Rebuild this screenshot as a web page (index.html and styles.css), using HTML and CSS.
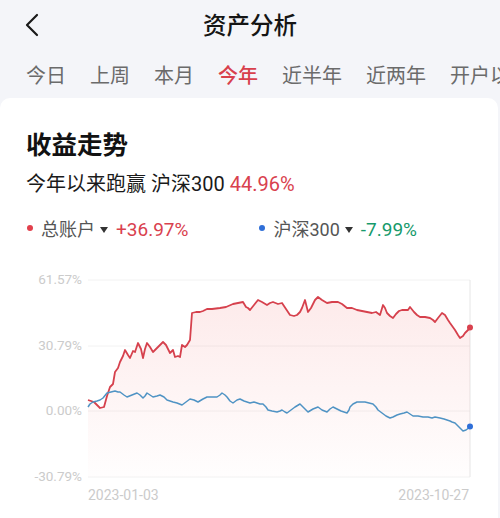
FILE: index.html
```html
<!DOCTYPE html>
<html lang="zh-CN">
<head>
<meta charset="utf-8">
<title>资产分析</title>
<link rel="stylesheet" href="styles.css">
</head>
<body>
<div class="page">
  <header class="topbar">
    <svg class="back" width="20" height="26" viewBox="0 0 20 26"><path d="M14 3 L4 13 L14 23" fill="none" stroke="#1a1a1a" stroke-width="2.2" stroke-linecap="round" stroke-linejoin="round"/></svg>
    <h1 class="title">资产分析</h1>
  </header>
  <nav class="tabs">
    <span class="tab">今日</span>
    <span class="tab">上周</span>
    <span class="tab">本月</span>
    <span class="tab active">今年</span>
    <span class="tab">近半年</span>
    <span class="tab">近两年</span>
    <span class="tab">开户以来</span>
  </nav>
  <section class="card">
    <div class="card-head">
      <h2 class="card-title">收益走势</h2>
      <p class="summary">今年以来跑赢 沪深300 <span class="up">44.96%</span></p>
      <div class="legend">
        <span class="item"><i class="dot red"></i><span class="name">总账户</span><i class="caret"></i><span class="up val">+36.97%</span></span>
        <span class="item second"><i class="dot blue"></i><span class="name">沪深300</span><i class="caret"></i><span class="down val">-7.99%</span></span>
      </div>
    </div>
    <svg class="chart" width="500" height="250" viewBox="0 260 500 250">
      <defs>
        <linearGradient id="fillg" x1="0" y1="0" x2="0" y2="1">
          <stop offset="0" stop-color="#f06060" stop-opacity="0.13"/>
          <stop offset="1" stop-color="#f06060" stop-opacity="0.01"/>
        </linearGradient>
      </defs>
      <g class="grid">
        <line x1="88" y1="280" x2="470" y2="280"/>
        <line x1="88" y1="346" x2="470" y2="346"/>
        <line x1="88" y1="411" x2="470" y2="411"/>
        <line x1="88" y1="477" x2="470" y2="477"/>
      </g>
      <line class="vline" x1="470" y1="280" x2="470" y2="477"/>
      <g class="ylab">
        <text x="82" y="280">61.57%</text>
        <text x="82" y="346">30.79%</text>
        <text x="82" y="411">0.00%</text>
        <text x="82" y="477">-30.79%</text>
      </g>
      <polygon fill="url(#fillg)" points="88,400 94,402 100,408 104,407 107,396 110,387 113,384 115,372 118,368 120,362 123,356 125,350 128,355 130,358 133,351 135,352 138,343 141,349 143,358 145,349 147,343 150,347 153,352 156,349 158,347 163,342 166,345 170,353 173,350 175,357 178,356 180,357 182,345 185,347 187,345 190,340 192,313 196,312 200,312 203,311 207,309 212,309 220,308 226,307 233,304 238,303 243,302 246,307 248,308 250,310 254,305 258,300 262,302 267,305 270,303 273,302 278,304 282,303 286,309 290,315 294,316 297,315 300,312 302,308 305,300 308,312 311,308 315,300 318,297 322,300 327,303 332,302 338,302 342,304 347,308 352,308 357,310 362,311 367,312 372,313 376,312 380,315 383,305 385,308 387,313 390,316 393,318 396,314 399,311 402,310 405,310 408,310 410,307 414,312 417,315 420,317 425,317 430,318 433,320 435,322 438,318 442,313 445,315 448,320 450,323 455,330 458,335 460,338 463,336 465,333 468,330 470,328 470,477 88,477"/>
      <polyline class="line-red" points="88,400 94,402 100,408 104,407 107,396 110,387 113,384 115,372 118,368 120,362 123,356 125,350 128,355 130,358 133,351 135,352 138,343 141,349 143,358 145,349 147,343 150,347 153,352 156,349 158,347 163,342 166,345 170,353 173,350 175,357 178,356 180,357 182,345 185,347 187,345 190,340 192,313 196,312 200,312 203,311 207,309 212,309 220,308 226,307 233,304 238,303 243,302 246,307 248,308 250,310 254,305 258,300 262,302 267,305 270,303 273,302 278,304 282,303 286,309 290,315 294,316 297,315 300,312 302,308 305,300 308,312 311,308 315,300 318,297 322,300 327,303 332,302 338,302 342,304 347,308 352,308 357,310 362,311 367,312 372,313 376,312 380,315 383,305 385,308 387,313 390,316 393,318 396,314 399,311 402,310 405,310 408,310 410,307 414,312 417,315 420,317 425,317 430,318 433,320 435,322 438,318 442,313 445,315 448,320 450,323 455,330 458,335 460,338 463,336 465,333 468,330 470,328"/>
      <polyline class="line-blue" points="88,407 90,404 93,402 97,401 100,400 103,398 107,393 111,392 115,391 118,392 120,392 124,395 127,397 132,395 137,393 140,395 143,398 145,396 147,393 150,395 153,397 157,396 160,395 164,397 167,400 170,401 173,402 177,403 182,405 186,402 190,399 194,400 198,402 203,399 207,397 212,397 217,397 220,395 222,393 225,395 227,397 230,401 233,403 237,400 240,399 244,401 247,402 250,403 254,402 257,403 260,404 263,404 266,407 268,410 272,411 277,412 280,411 282,410 285,412 287,413 291,410 295,407 300,404 304,408 308,412 313,409 318,407 322,410 327,412 330,409 333,407 337,409 341,411 347,413 349,410 350,407 353,404 357,402 361,402 365,402 369,403 373,404 376,407 378,410 382,413 386,416 390,418 393,417 397,415 400,414 404,413 407,412 410,414 413,416 418,416 423,417 428,417 432,418 435,417 440,418 444,419 447,420 450,421 452,422 455,423 457,425 460,428 463,431 466,430 470,427"/>
      <circle cx="470" cy="327.5" r="3" fill="#d9414e"/>
      <circle cx="470" cy="426.5" r="3" fill="#2f6fd8"/>
      <g class="xlab">
        <text x="88" y="496" text-anchor="start">2023-01-03</text>
        <text x="469" y="496" text-anchor="end">2023-10-27</text>
      </g>
    </svg>
  </section>
</div>
</body>
</html>
```
FILE: styles.css
```css
* { box-sizing: border-box; }
html, body { margin: 0; padding: 0; }
body {
  width: 500px;
  height: 518px;
  overflow: hidden;
  background: #f4f5f9;
  font-family: Roboto, "Noto Sans CJK SC", sans-serif;
  color: #1a1a1a;
}
.page { width: 500px; }
.topbar {
  position: relative;
  height: 54px;
  display: flex;
  align-items: center;
  justify-content: center;
}
.back {
  position: absolute;
  left: 23px;
  top: 12px;
}
.title {
  margin: 0;
  font-size: 23.5px;
  font-weight: 500;
  line-height: 1;
  color: #151515;
}
.tabs {
  display: flex;
  gap: 24px;
  padding-left: 26px;
  height: 44px;
  align-items: center;
  white-space: nowrap;
  overflow: hidden;
}
.tab {
  font-size: 20px;
  line-height: 1;
  color: #6b6b6b;
  flex: none;
}
.tab.active {
  color: #d8404c;
  font-weight: 500;
}
.card {
  background: #fff;
  border-radius: 10px;
  margin: 0 2px 0 0;
  height: 430px;
}
.card-head { padding: 31px 26px 0; }
.card-title {
  margin: 0;
  font-size: 25.5px;
  line-height: 32px;
  font-weight: 600;
  color: #121212;
}
.summary {
  margin: 10px 0 0;
  font-size: 20px;
  line-height: 26px;
  color: #1a1a1a;
}
.up { color: #d9414e; }
.down { color: #179a6b; }
.legend {
  display: flex;
  margin-top: 21px;
  height: 24px;
  align-items: center;
  font-size: 18px;
  line-height: 24px;
}
.item { display: flex; align-items: center; }
.item.second { margin-left: 70px; }
.dot {
  width: 6px;
  height: 6px;
  border-radius: 50%;
  margin-right: 8px;
  margin-left: 1px;
  position: relative;
  top: -2px;
}
.dot.red { background: #e2404c; }
.dot.blue { background: #2f6fd8; }
.name { color: #555; }
.caret {
  width: 0;
  height: 0;
  border-left: 4.5px solid transparent;
  border-right: 4.5px solid transparent;
  border-top: 6px solid #333;
  margin: 0 8px 0 5px;
}
.val { font-size: 19px; }
.chart {
  display: block;
  margin-top: 18px;
}
.grid line { stroke: #f2f2f2; stroke-width: 1; }
.vline { stroke: #e6e6e6; stroke-width: 1; }
.ylab text {
  font-family: Roboto, sans-serif;
  font-size: 13.5px;
  fill: #cbcbcb;
  text-anchor: end;
  dominant-baseline: middle;
}
.xlab text {
  font-family: Roboto, sans-serif;
  font-size: 14px;
  fill: #cbcbcb;
  dominant-baseline: middle;
}
.line-red { fill: none; stroke: #d6414d; stroke-width: 1.8; stroke-linejoin: round; }
.line-blue { fill: none; stroke: #4f93c4; stroke-width: 1.5; stroke-linejoin: round; }
```
